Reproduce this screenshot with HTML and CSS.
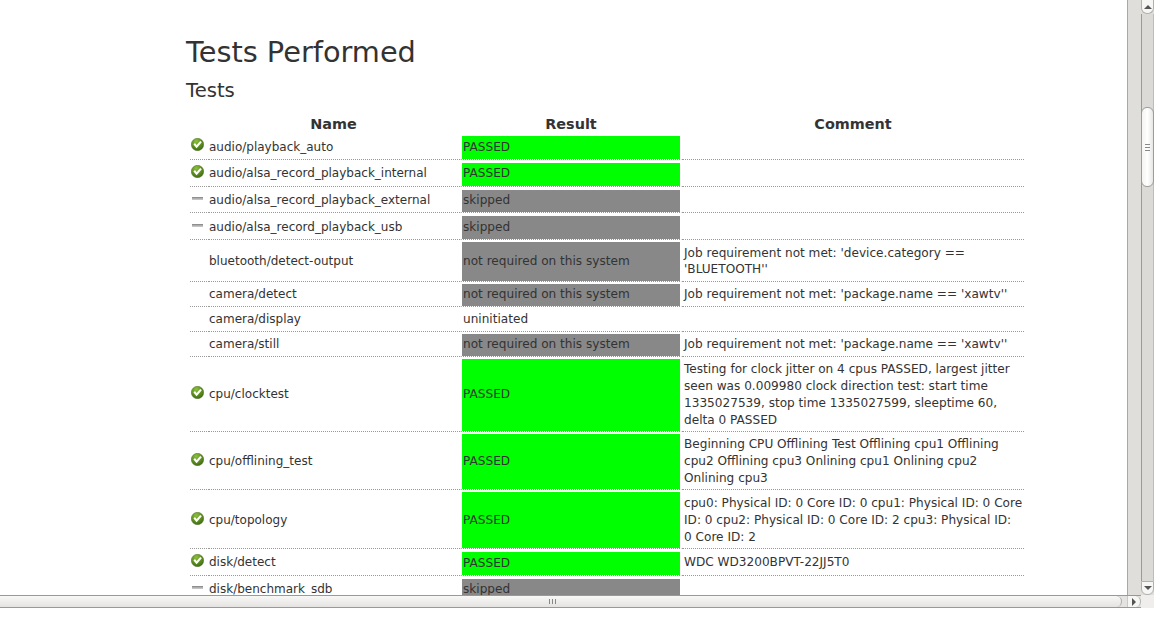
FILE: index.html
```html
<!DOCTYPE html>
<html lang="en">
<head>
<meta charset="utf-8">
<title>Tests Performed</title>
<link rel="stylesheet" href="styles.css">
</head>
<body>
<svg class="defs" width="0" height="0" aria-hidden="true">
  <defs>
    <radialGradient id="g" cx="0.4" cy="0.25" r="0.85"><stop offset="0" stop-color="#8cc03a"/><stop offset="1" stop-color="#36620e"/></radialGradient>
    <symbol id="ok" viewBox="0 0 13 13">
      <circle cx="6.5" cy="6.5" r="6.2" fill="url(#g)" stroke="#4a6f22" stroke-width="0.5"/>
      <path d="M3.2 5.8 L5.6 8.6 L10 3.6" fill="none" stroke="#fff" stroke-width="2.1"/>
    </symbol>
    <symbol id="skip" viewBox="0 0 13 13">
      <rect x="1" y="5" width="11" height="3" fill="#c4c4c4"/>
      <rect x="1" y="5" width="11" height="1.4" fill="#8f8f8f"/>
    </symbol>
  </defs>
</svg>
<div class="window">
  <div class="top">
    <main class="content">
      <h1>Tests Performed</h1>
      <h2>Tests</h2>
      <table class="tests">
        <colgroup><col class="c-ic"><col class="c-nm"><col class="c-res"><col class="c-cm"></colgroup>
        <thead>
          <tr><th class="name" colspan="2">Name</th><th>Result</th><th>Comment</th></tr>
        </thead>
        <tbody>
          <tr class="r27"><td class="ic"><svg class="icon"><use href="#ok"/></svg></td><td class="nm">audio/playback_auto</td><td class="res pass">PASSED</td><td class="cm"></td></tr>
          <tr class="r27"><td class="ic"><svg class="icon"><use href="#ok"/></svg></td><td class="nm">audio/alsa_record_playback_internal</td><td class="res pass">PASSED</td><td class="cm"></td></tr>
          <tr class="r27"><td class="ic"><svg class="icon"><use href="#skip"/></svg></td><td class="nm">audio/alsa_record_playback_external</td><td class="res grey">skipped</td><td class="cm"></td></tr>
          <tr class="r27"><td class="ic"><svg class="icon"><use href="#skip"/></svg></td><td class="nm">audio/alsa_record_playback_usb</td><td class="res grey">skipped</td><td class="cm"></td></tr>
          <tr><td class="ic"></td><td class="nm">bluetooth/detect-output</td><td class="res grey">not required on this system</td><td class="cm">Job requirement not met: 'device.category == 'BLUETOOTH''</td></tr>
          <tr><td class="ic"></td><td class="nm">camera/detect</td><td class="res grey">not required on this system</td><td class="cm">Job requirement not met: 'package.name == 'xawtv''</td></tr>
          <tr><td class="ic"></td><td class="nm">camera/display</td><td class="res">uninitiated</td><td class="cm">&nbsp;</td></tr>
          <tr><td class="ic"></td><td class="nm">camera/still</td><td class="res grey">not required on this system</td><td class="cm">Job requirement not met: 'package.name == 'xawtv''</td></tr>
          <tr><td class="ic"><svg class="icon"><use href="#ok"/></svg></td><td class="nm">cpu/clocktest</td><td class="res pass">PASSED</td><td class="cm">Testing for clock jitter on 4 cpus PASSED, largest jitter seen was 0.009980 clock direction test: start time 1335027539, stop time 1335027599, sleeptime 60, delta 0 PASSED</td></tr>
          <tr><td class="ic"><svg class="icon"><use href="#ok"/></svg></td><td class="nm">cpu/offlining_test</td><td class="res pass">PASSED</td><td class="cm">Beginning CPU Offlining Test Offlining cpu1 Offlining cpu2 Offlining cpu3 Onlining cpu1 Onlining cpu2 Onlining cpu3</td></tr>
          <tr><td class="ic"><svg class="icon"><use href="#ok"/></svg></td><td class="nm">cpu/topology</td><td class="res pass">PASSED</td><td class="cm">cpu0: Physical ID: 0 Core ID: 0 cpu1: Physical ID: 0 Core ID: 0 cpu2: Physical ID: 0 Core ID: 2 cpu3: Physical ID:<br>0 Core ID: 2</td></tr>
          <tr class="r27"><td class="ic"><svg class="icon"><use href="#ok"/></svg></td><td class="nm">disk/detect</td><td class="res pass">PASSED</td><td class="cm">WDC WD3200BPVT-22JJ5T0</td></tr>
          <tr class="r27"><td class="ic"><svg class="icon"><use href="#skip"/></svg></td><td class="nm">disk/benchmark_sdb</td><td class="res grey">skipped</td><td class="cm"></td></tr>
        </tbody>
      </table>
    </main>
    <div class="vbar">
      <div class="arrow-v up"><span class="tri-up"></span></div>
      <div class="vtrack">
        <div class="vthumb"><span class="grip-v"></span></div>
      </div>
      <div class="arrow-v down"><span class="tri-down"></span></div>
    </div>
  </div>
  <div class="bottom">
    <div class="hbar">
      <div class="hthumb"><span class="grip-h"></span></div>
      <div class="arrow-h"><span class="tri-right"></span></div>
    </div>
    <div class="corner"></div>
  </div>
</div>
</body>
</html>
```
FILE: styles.css
```css
html, body { margin: 0; padding: 0; height: 100%; background: #fff; overflow: hidden; }
body { font-family: "DejaVu Sans", sans-serif; color: #333; }
.defs { display: block; height: 0; }
.window { width: 1154px; height: 608px; display: flex; flex-direction: column; }
.top { display: flex; height: 595px; }
.content { width: 1127px; height: 595px; overflow: hidden; padding: 35px 0 0 186px; box-sizing: border-box; flex: none; }
h1 { margin: 0; font-size: 28.8px; font-weight: 400; line-height: 34px; color: #333; }
h2 { margin: 10px 0 0; font-size: 19.6px; font-weight: 400; line-height: 24px; color: #333; }
.tests { width: 834px; margin: 11px 0 0 4px; border-collapse: separate; border-spacing: 0; table-layout: fixed; font-size: 12px; line-height: 16.8px; }
.c-ic { width: 19px; }
.c-nm { width: 251px; }
.c-res { width: 222px; }
.c-cm { width: 342px; }
th { font-size: 14.4px; font-weight: 700; padding: 1px 0 0; height: 19px; box-sizing: border-box; line-height: 16px; text-align: center; }
.name { padding-left: 17px; }
td { padding: 4.6px 0 2.55px; border-bottom: 1px dotted #999; vertical-align: middle; box-sizing: border-box; }
.ic { padding-left: 1px; padding-top: 4.6px; padding-bottom: 2.55px; }
.icon { display: block; width: 13px; height: 13px; margin-bottom: 4px; }
.res { font-size: 12.1px; padding: 2px 0 2.55px 1px; border-left: 2px solid #fff; border-right: 2px solid #fff; border-top: 2.6px solid #fff; background-clip: padding-box; }
.pass { background-color: #00ff00; }
.grey { background-color: #888; }
.cm { font-size: 12.1px; padding-left: 2px; padding-right: 0; }
.r27 td { height: 26.75px; }
.r27 .res { border-top-width: 3px; padding-top: 2px; }
.vbar { width: 27px; flex: none; display: flex; flex-direction: column; background: #e0dedb; border-left: 1px solid #a8a8a6; box-sizing: border-box; }
.vtrack { flex: 1; display: flex; flex-direction: column; margin-left: 13px; border-left: 1px solid #9a9a98; border-right: 1px solid #bcbcba; background: #dcdad7; padding-top: 93px; }
.arrow-v { margin-left: 13px; height: 14px; background: #f6f6f5; border: 1px solid #b0b0ae; display: flex; align-items: center; justify-content: center; box-sizing: border-box; }
.up { border-top: 0; border-radius: 0 0 6px 6px; }
.down { border-bottom: 1px solid #b0b0ae; border-radius: 0 0 6px 6px; }
.vthumb { height: 80px; background: linear-gradient(90deg, #f4f4f3, #fff 50%, #e6e6e4); border: 1px solid #9c9c9a; border-radius: 6px; margin: 0 -1px; display: flex; align-items: center; justify-content: center; box-sizing: border-box; }
.grip-v { width: 5px; height: 7px; background: repeating-linear-gradient(180deg, #888 0 1px, transparent 1px 3px); }
.tri-up { border: 4px solid transparent; border-top: 0; border-bottom: 4px solid #555; }
.tri-down { border: 4px solid transparent; border-bottom: 0; border-top: 4px solid #555; }
.tri-right { border: 4px solid transparent; border-right: 0; border-left: 4px solid #555; }
.bottom { height: 13px; display: flex; }
.hbar { flex: 1; display: flex; height: 13px; background: #e4e3e1; border-top: 1px solid #999; border-bottom: 1px solid #999; box-sizing: border-box; }
.hthumb { flex: 1; border-right: 1px solid #aaa; border-radius: 0 6px 6px 0; background: linear-gradient(180deg, #f8f8f7, #e4e3e1); display: flex; align-items: center; justify-content: center; box-sizing: border-box; padding-right: 16px; margin-right: 5px; }
.grip-h { width: 7px; height: 5px; background: repeating-linear-gradient(90deg, #888 0 1px, transparent 1px 3px); }
.arrow-h { width: 14px; background: #f6f6f5; border-right: 1px solid #b0b0ae; border-left: 1px solid #c8c8c6; border-radius: 0 6px 6px 0; display: flex; align-items: center; justify-content: center; box-sizing: border-box; }
.corner { width: 13px; background: #efeeec; }
```
